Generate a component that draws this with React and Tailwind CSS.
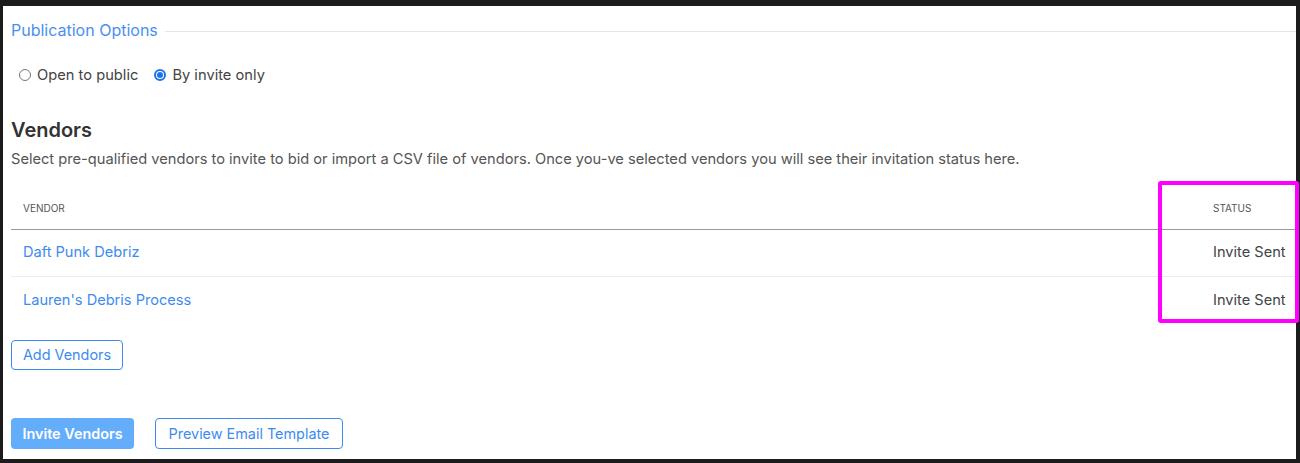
import React from 'react';

const vendors = ['Daft Punk Debriz', "Lauren's Debris Process"];

const Radio = ({ checked, label }) => (
  <label className="flex items-center gap-[6px]">
    {checked ? (
      <span className="w-[12px] h-[12px] rounded-full border-[2px] border-[#1a73e8] bg-white flex items-center justify-center">
        <span className="w-[6px] h-[6px] rounded-full bg-[#1a73e8]" />
      </span>
    ) : (
      <span className="w-[12px] h-[12px] rounded-full border border-[#777] bg-white" />
    )}
    <span>{label}</span>
  </label>
);

export default function App() {
  return (
    <div className="relative h-[463px] w-[1300px] bg-[#1c1c1c] pt-[6px] pl-[3px] pr-[4px] pb-[4px] font-['Inter',sans-serif]">
      <div className="h-full bg-white pt-[14px] pl-[8px]">
        {/* Publication options */}
        <div className="flex items-center h-[20px]">
          <span className="text-[16px] leading-[20px] text-[#4a8ff5]">Publication Options</span>
          <div className="flex-1 h-[1px] bg-[#e6e6e6] ml-[7px] mt-[2px]" />
        </div>

        <div className="mt-[25px] h-[20px] flex items-center gap-[16px] pl-[8px] text-[14.7px] leading-[20px] text-[#444]">
          <Radio label="Open to public" />
          <Radio checked label="By invite only" />
        </div>

        {/* Vendors */}
        <h2 className="mt-[33px] text-[20px] leading-[24px] font-semibold text-[#333]">Vendors</h2>
        <p className="mt-[7px] text-[14.65px] leading-[20px] text-[#555]">
          Select pre-qualified vendors to invite to bid or import a CSV file of vendors. Once you-ve selected vendors you will see their invitation status here.
        </p>

        <div className="mt-[18px]">
          <div className="flex items-center h-[43px] border-b border-[#9a9a9a] pl-[12px] text-[10px] text-[#555] uppercase">
            <span className="flex-1">Vendor</span>
            <span className="w-[83px]">Status</span>
          </div>
          {vendors.map((v, i) => (
            <div
              key={v}
              className={`flex items-center h-[47px] pl-[12px] text-[14.6px] ${i === 0 ? 'border-b border-[#ececec]' : ''}`}
            >
              <span className="flex-1 text-[#3d8bf0]">{v}</span>
              <span className="w-[83px] text-[#444]">Invite Sent</span>
            </div>
          ))}
        </div>

        <button className="mt-[16px] h-[30px] w-[112px] rounded-[4px] border-[1.5px] border-[#3d8bf0] text-[14.4px] text-[#3d8bf0] bg-white">
          Add Vendors
        </button>

        <div className="mt-[48px] flex gap-[21px]">
          <button className="h-[31px] w-[123px] rounded-[4px] bg-[#63adfb] text-[14.4px] font-semibold text-white">
            Invite Vendors
          </button>
          <button className="h-[31px] w-[188px] rounded-[4px] border-[1.5px] border-[#3d8bf0] text-[14.4px] text-[#3d8bf0] bg-white">
            Preview Email Template
          </button>
        </div>
      </div>

      {/* highlight annotation */}
      <div className="absolute left-[1158px] top-[181px] w-[141px] h-[142px] border-[4px] border-[#ff00ff] rounded-[3px]" />
    </div>
  );
}
